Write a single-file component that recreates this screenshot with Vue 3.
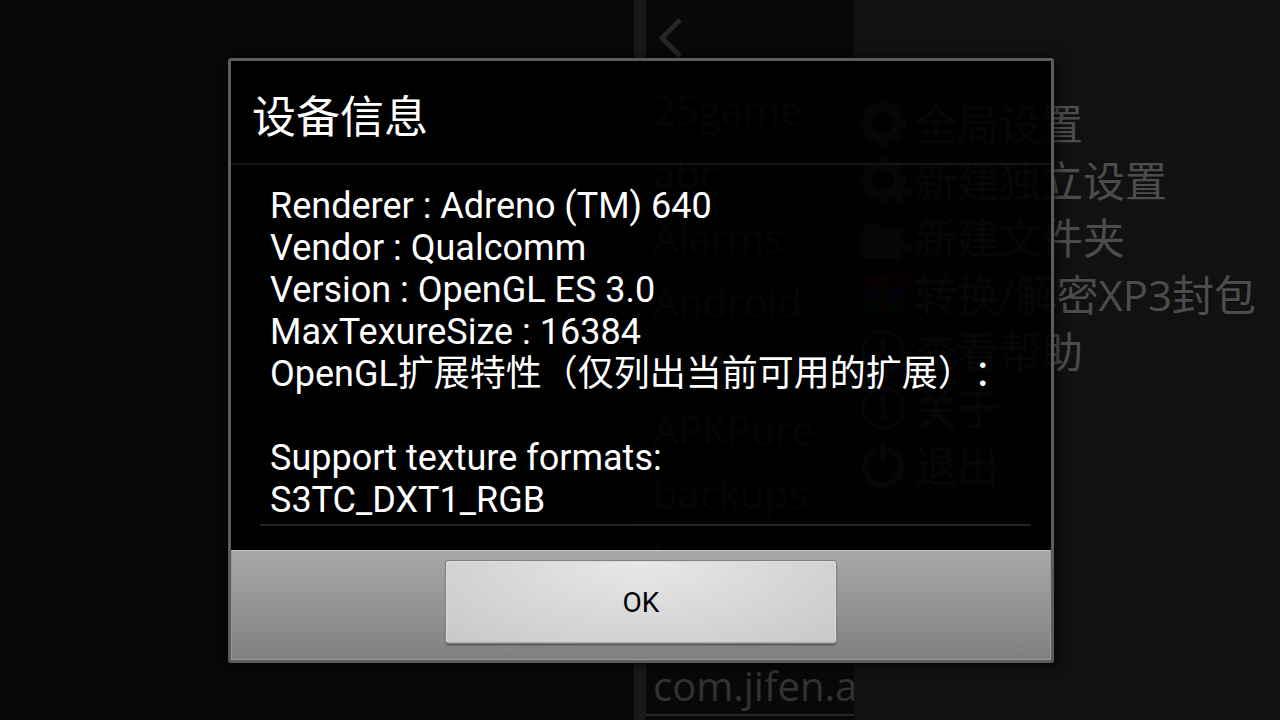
<script setup>
const files = ['25game', 'abc', 'Alarms', 'Android', 'Andubun', 'APKPure', 'backups', 'browser', 'cache', 'com.jifen.android']
const actions = [
  { icon: 'gear', label: '全局设置' },
  { icon: 'gearPlus', label: '新建独立设置' },
  { icon: 'folder', label: '新建文件夹' },
  { icon: 'archive', label: '转换/解密XP3封包' },
  { icon: 'info', label: '查看帮助' },
  { icon: 'info', label: '关于' },
  { icon: 'power', label: '退出' }
]
const teeth = [0, 45, 90, 135, 180, 225, 270, 315]
const lines = [
  'Renderer : Adreno (TM) 640',
  'Vendor : Qualcomm',
  'Version : OpenGL ES 3.0',
  'MaxTexureSize : 16384',
  'OpenGL扩展特性（仅列出当前可用的扩展）：',
  '',
  'Support texture formats:',
  'S3TC_DXT1_RGB'
]
</script>

<template>
  <div class="screen">
    <div class="backdrop">
      <div class="stage"></div>
      <div class="browser">
        <button class="back" aria-label="Back">
          <svg width="28" height="40" viewBox="0 0 28 40"><path d="M22 2 4 20l18 18" fill="none" stroke="currentColor" stroke-width="5" /></svg>
        </button>
        <ul class="files">
          <li v-for="f in files" :key="f">{{ f }}</li>
        </ul>
      </div>
      <nav class="menu">
        <button v-for="a in actions" :key="a.label" class="action">
          <svg class="icon" width="54" height="50" viewBox="0 0 54 50">
            <g v-if="a.icon === 'gear' || a.icon === 'gearPlus'">
              <circle cx="25" cy="24" r="15" fill="none" stroke="currentColor" stroke-width="9" />
              <path v-for="t in teeth" :key="t" d="M19 6 21 1h8l2 5z" fill="currentColor" :transform="`rotate(${t} 25 24)`" />
              <path v-if="a.icon === 'gearPlus'" d="M29 35h25M41 23v25" stroke="currentColor" stroke-width="5" />
            </g>
            <g v-else-if="a.icon === 'folder'">
              <path d="M0 20h5v-5l4-4h12l5 5h18v8h2v15H41v6H4z" fill="currentColor" />
              <path d="M29 35h25M41 23v25" stroke="currentColor" stroke-width="5" />
            </g>
            <g v-else-if="a.icon === 'archive'">
              <path fill="#500" d="M4 5h43v11H4z" />
              <path fill="#0c1460" d="M4 18h43v11H4z" />
              <path fill="#003a0c" d="M4 31h43v12H4z" />
              <path fill="#4c3008" d="M21 5h9v38h-9z" />
            </g>
            <g v-else-if="a.icon === 'info'">
              <circle cx="25" cy="24" r="20" fill="none" stroke="currentColor" stroke-width="3" />
              <path d="M22 12q3-3 6 0l-1 16h-4z" fill="currentColor" />
              <circle cx="25" cy="34" r="3" fill="currentColor" />
            </g>
            <g v-else fill="none" stroke="currentColor" stroke-width="6" stroke-linecap="round">
              <path d="M17 10a18 18 0 1 0 16 0M25 4v15" />
            </g>
          </svg>
          <span>{{ a.label }}</span>
        </button>
      </nav>
    </div>
    <section class="dialog" role="dialog" aria-labelledby="dialog-title">
      <h1 id="dialog-title">设备信息</h1>
      <div class="body">
        <div class="info">
          <p v-for="(l, i) in lines" :key="i">{{ l }}</p>
        </div>
      </div>
      <footer><button class="ok">OK</button></footer>
    </section>
  </div>
</template>

<style>
body { margin: 0; background: #080808; }
</style>

<style scoped>
* { box-sizing: border-box; }
button { border: 0; padding: 0; background: none; color: inherit; font: inherit; }
.screen {
  min-height: 100vh;
  padding: 1px 0 0 2px;
  display: grid;
  place-items: center;
  position: relative;
  overflow: hidden;
  font-family: Roboto, "Noto Sans CJK SC", sans-serif;
}
.backdrop {
  position: absolute;
  inset: 0;
  display: grid;
  grid-template-columns: minmax(0, 634fr) minmax(0, 220fr) minmax(0, 426fr);
  background: #080808;
  font-family: "Open Sans", "Noto Sans CJK SC", sans-serif;
}
.browser { border-left: 12px solid #191919; overflow: hidden; color: #323232; }
.back { display: flex; align-items: center; width: 100%; height: 76px; padding-left: 12px; color: #262626; }
.files { list-style: none; margin: 0; padding: 0; }
.files li {
  height: 64px;
  padding-left: 7px;
  line-height: 68px;
  font-size: 40px;
  white-space: nowrap;
  border-bottom: 2px solid #262626;
}
.menu { padding: 95px 0 0 4px; background: #111; color: #4c4c4c; overflow: hidden; }
.action {
  display: flex;
  align-items: center;
  gap: 3px;
  height: 57px;
  font-size: 42px;
  line-height: 57px;
  white-space: nowrap;
}
.icon { flex: none; color: #3c3c3c; }
.dialog {
  position: relative;
  width: 826px;
  max-width: 100%;
  border: 3px solid #5c5c5c;
  border-radius: 3px;
  background: rgba(0, 0, 0, .9);
  box-shadow: 0 2px 12px 2px rgba(0, 0, 0, .6);
  color: #fff;
}
h1 {
  margin: 0;
  padding: 26px 20px 14px 21px;
  border-bottom: 2px solid #151515;
  font-size: 44px;
  line-height: 62px;
  font-weight: 400;
}
.body { padding: 20px 20px 24px 29px; }
.info { padding: 0 10px 3px; border-bottom: 2px solid #242424; }
p {
  margin: 0;
  min-height: 42px;
  font-size: 36px;
  line-height: 42px;
  white-space: nowrap;
  text-spacing-trim: space-all;
}
footer {
  display: flex;
  justify-content: center;
  padding: 10px 0 16px;
  border: 1px solid #999;
  border-top-color: #c4c4c4;
  background: linear-gradient(#a8a8a8, #808080);
}
.ok {
  width: 390px;
  height: 82px;
  border: 1px solid #ddd;
  border-bottom-color: #aaa;
  border-radius: 2px;
  outline: 1px solid #808080;
  background: radial-gradient(ellipse farthest-corner at 50% 0, #e8e8e8, #c8c8c8);
  box-shadow: 0 2px 2px #444;
  color: #000;
  font-size: 28px;
}
</style>
